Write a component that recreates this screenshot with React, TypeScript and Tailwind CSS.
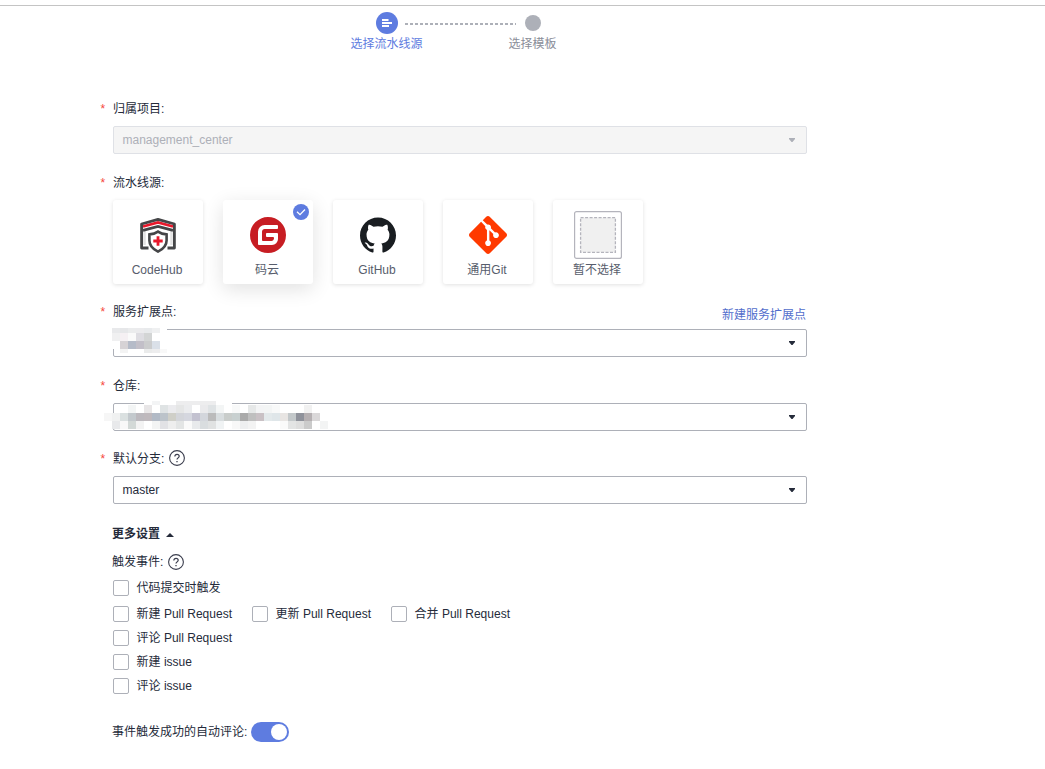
import React from "react";
import { Switch } from "@headlessui/react";
import clsx from "clsx";
import { SiGit, SiGitee, SiGithub } from "react-icons/si";

const CodeHubIcon = () => (
  <svg width="36" height="36" viewBox="0 0 36 36" fill="none">
    <path d="M4.500 14v14M31.500 14v14" stroke="#e2e2e2" strokeWidth="2.500" />
    <path d="M3 9.600 18 5.400l15 4.200" stroke="#e8192c" strokeWidth="2.600" />
    <path
      d="M8.500 31H1.600V7L18 2.300 34.400 7v24h-6.900"
      stroke="#454648"
      strokeWidth="2.800"
      strokeLinejoin="round"
    />
    <path d="M3 13.400 18 9.400l15 4" stroke="#454648" strokeWidth="2.800" />
    <path
      d="M18 14.600c2.800 2 5.600 2.600 8.600 2.800v6c0 5-3.400 8.600-8.600 11.200-5.200-2.600-8.600-6.200-8.600-11.200v-6c3-.2 5.800-.8 8.600-2.800Z"
      fill="#fff"
      stroke="#454648"
      strokeWidth="2.600"
    />
    <path d="M18 19.300v9.400M13.300 24h9.400" stroke="#e8192c" strokeWidth="2.800" />
  </svg>
);

const EmptyIcon = () => (
  <svg width="48" height="48" viewBox="0 0 48 48" fill="none">
    <rect x="0.600" y="0.600" width="46.800" height="46.800" rx="2" stroke="#b4b4bc" strokeWidth="1.200" />
    <rect
      x="6.600"
      y="6.600"
      width="34.800"
      height="34.800"
      fill="#f0f0f0"
      stroke="#b4b4bc"
      strokeWidth="1.300"
      strokeDasharray="3 1.500"
    />
  </svg>
);

const sources = [
  { name: "CodeHub", icon: <CodeHubIcon /> },
  { name: "码云", icon: <SiGitee size={36} color="#c71d23" /> },
  { name: "GitHub", icon: <SiGithub size={36} color="#191d21" /> },
  { name: "通用Git", icon: <SiGit size={38} color="#ff3a00" /> },
  { name: "暂不选择", icon: <EmptyIcon /> },
];

const Required = () => (
  <span className="-ml-[12.5px] w-[12.5px] shrink-0 text-[#f5483b]">*</span>
);

const HelpIcon = ({ className }: { className: string }) => (
  <svg className={clsx("h-4 w-4", className)} viewBox="0 0 16 16" fill="none" stroke="#3a3d4d">
    <circle cx="8" cy="8" r="7.400" strokeWidth="1.100" />
    <path d="M5.800 6.500c0-1.300.9-2.200 2.200-2.200s2.200.8 2.200 2c0 1.500-2.200 1.700-2.200 3.300" strokeWidth="1.200" />
    <path d="M8 10.900v1.300" strokeWidth="1.300" />
  </svg>
);

const Label = ({ children }: { children: React.ReactNode }) => (
  <div className="flex h-5 items-center pt-0.5">
    <Required />
    {children}
  </div>
);

type SelectProps = {
  value?: string;
  disabled?: boolean;
  children?: React.ReactNode;
};

const Select = ({ value, disabled, children }: SelectProps) => (
  <div
    className={clsx(
      "relative mt-2 flex h-7 items-center justify-between rounded-[2px] border pl-[8.500px] pr-[11px]",
      disabled ? "border-[#dfe1e6] bg-[#f5f5f5] text-[#adb0b8]" : "border-[#adb0b8]"
    )}
  >
    <span>{value}</span>
    <svg width="6" height="4" viewBox="0 0 6 4" fill={disabled ? "#adb0b8" : "#252b3a"}>
      <path d="M0 0h6v1L3.500 4h-1L0 1z" />
    </svg>
    {children}
  </div>
);

const Checkbox = ({ label }: { label: string }) => (
  <label className="flex h-4 w-[139px] items-center whitespace-nowrap">
    <span className="mr-[7.600px] h-4 w-4 shrink-0 rounded-[2px] border border-[#adb0b8]" />
    {label}
  </label>
);

// masked values, one colour per 8px block, "" lets the field show through
const endpointMask = [
  ["#e8e9eb", "#e6e7e9", "#ebeced", "#ebebed", "#e8eaec", "#eff0f1", "#fff"],
  ["#f0f0f1", "#f5f0f3", "#fafafa", "#dedde2", "#d3d5d5", "#fff", "#fff"],
  ["#fff", "#d6d2d5", "#b5bbc8", "#c2bfc8", "#cbcccd", "#dae0e8", "#fff"],
  ["", "#f3f3f3", "", "", "#eaebeb", "#ededee", "#f8f8f8"],
];

const repoMask = [
  ["", "", "", "", "", "#fff", "#f3f4f5", "#fff", "#fff", "#ededee", "#ededee", "#ededee", "#ededee", "#ededee", "#fff", "#fff", "", "", "", "", "", "", "", "", "", "", "", ""],
  ["", "", "", "#f3f5f5", "", "#e8e6e7", "", "#dfe3e4", "#ebebee", "#e5e6e6", "#ebecee", "", "#eaeaec", "#dfe3e5", "#f3f5f5", "", "#f8f9f9", "", "#e6e8e8", "#f3f4f5", "#f3f5f5", "#f8f9f9", "", "", "", "#f1f1f1", "", ""],
  ["#f6f6f6", "#f0f1f1", "#dae0e0", "#c3c9cd", "#bcb9be", "#bfb9bd", "#b2bac6", "#bcc3ca", "#cfcfc8", "#d3d5da", "#d5d7df", "#c3c2d0", "#d3d6dc", "#bbbbbb", "#d8dddf", "#c9cdcb", "#c8d0d0", "#aaaaaa", "#bfbfbf", "#c9c1c5", "#e3e9eb", "#dfe6e9", "#e8e5e3", "#c3c8ca", "#8f929b", "#b5b0b2", "#dad8d9", ""],
  ["", "#e8e9eb", "#f8f8f8", "#d3d9d7", "#f3f3f3", "", "#f3f4f4", "#e2e2e5", "#eeeeee", "#e3e5e5", "#fafafa", "#e8eaec", "#d9dddf", "#e0e2e2", "#f0f3f4", "", "#f8f8f8", "#eeeff0", "#f3f3f3", "", "", "", "#fafafa", "#e3e4e4", "#dedede", "#cbcbcb", "#fff", "#f3f4f4"],
];

type MaskProps = { rows: string[][]; firstRow: string; className: string };

const Mask = ({ rows, firstRow, className }: MaskProps) => (
  <div className={clsx("absolute overflow-hidden", className)}>
    {rows.map((row, i) => (
      <div key={i} className={clsx("flex", i === 0 ? firstRow : "h-2")}>
        {row.map((color, j) => (
          <span
            key={j}
            className="h-full w-2 shrink-0"
            style={{ backgroundColor: color || "transparent" }}
          />
        ))}
      </div>
    ))}
  </div>
);

const Stepper = () => (
  <div className="h-[92px] pt-1.5">
    <div className="flex h-[22px] items-center pl-[376px]">
      <div className="flex h-[22px] w-[22px] items-center justify-center rounded-full bg-[#5e7ce0]">
        <svg width="10" height="8" viewBox="0 0 10 8" fill="#fff">
          <path d="M0 0h6.500v2H0zM0 3h10v2H0zM0 6h7v2H0z" />
        </svg>
      </div>
      <svg className="ml-[7px] mt-0.5" width="111" height="2">
        <path d="M0 1h111" stroke="#adb0b8" strokeWidth="2" strokeDasharray="3 2" />
      </svg>
      <div className="ml-[9px] h-4 w-4 rounded-full bg-[#adb0b8]" />
    </div>
    <div className="flex h-5 items-center gap-[86px] pl-[350.500px]">
      <span className="text-[#5e7ce0]">选择流水线源</span>
      <span className="text-[#8a8e99]">选择模板</span>
    </div>
  </div>
);

const App = () => {
  const [selected, setSelected] = React.useState("码云");
  const [autoComment, setAutoComment] = React.useState(true);

  return (
    <div className="h-[769px] w-[1045px] overflow-hidden bg-white font-['Liberation_Sans','Noto_Sans_CJK_SC',sans-serif] text-xs text-[#252b3a]">
      <div className="h-1.5 border-b border-[#c4c4c4]" />
      <Stepper />

      <div className="ml-[113px] w-[694px]">
        <Label>归属项目:</Label>
        <Select value="management_center" disabled />

        <div className="mt-[18px]">
          <Label>流水线源:</Label>
        </div>
        <div className="mt-2 flex gap-5">
          {sources.map((source) => (
            <button
              key={source.name}
              type="button"
              onClick={() => setSelected(source.name)}
              className={clsx(
                "relative h-[84px] w-[90px] rounded-[3px] bg-white pb-1 text-[#575d6c]",
                selected === source.name
                  ? "shadow-[0_5px_20px_rgba(0,0,0,0.12)]"
                  : "shadow-[0_1px_4px_rgba(0,0,0,0.12)]"
              )}
            >
              <div className="flex h-[60px] items-center justify-center pt-2.5">{source.icon}</div>
              <div className="h-5 pr-0.5 leading-5">{source.name}</div>
              {selected === source.name && (
                <span className="absolute right-1 top-1 flex h-4 w-4 items-center justify-center rounded-full bg-[#5e7ce0]">
                  <svg width="10" height="8" viewBox="0 0 10 8" fill="none" stroke="#fff" strokeWidth="1.300">
                    <path d="M1 3.800 4 6.700 9 1.500" />
                  </svg>
                </span>
              )}
            </button>
          ))}
        </div>

        <div className="mt-[17px] flex justify-between">
          <Label>服务扩展点:</Label>
          <a href="#" className="-mb-2 pr-px pt-1.5 text-[#526ecc]">
            新建服务扩展点
          </a>
        </div>
        <Select>
          <Mask rows={endpointMask} firstRow="h-[5px]" className="-left-0.5 -top-0.5 h-[25px] w-[55px]" />
        </Select>

        <div className="mt-[18px]">
          <Label>仓库:</Label>
        </div>
        <Select>
          <Mask rows={repoMask} firstRow="h-1" className="-left-2.5 -top-[3px] h-7 w-[224px]" />
        </Select>

        <div className="mt-[17px]">
          <Label>
            默认分支:
            <HelpIcon className="-mt-0.5 ml-[5px]" />
          </Label>
        </div>
        <Select value="master" />

        <div className="-ml-px mt-[19px] flex h-5 items-center pt-0.5 font-bold">
          更多设置
          <svg className="ml-1.5 mt-px" width="8" height="4" viewBox="0 0 8 4" fill="#252b3a">
            <path d="M4 0 8 4H0z" />
          </svg>
        </div>
        <div className="-ml-px mt-[9px] flex h-5 items-center">
          触发事件:
          <HelpIcon className="ml-[5px]" />
        </div>

        <div className="mt-2">
          <Checkbox label="代码提交时触发" />
        </div>
        <div className="mt-2.5 flex">
          <Checkbox label="新建 Pull Request" />
          <Checkbox label="更新 Pull Request" />
          <Checkbox label="合并 Pull Request" />
        </div>
        <div className="mt-2 flex flex-col gap-2">
          <Checkbox label="评论 Pull Request" />
          <Checkbox label="新建 issue" />
          <Checkbox label="评论 issue" />
        </div>

        <div className="-ml-px mt-7 flex h-5 items-center">
          <span className="-mt-px">事件触发成功的自动评论:</span>
          <Switch
            checked={autoComment}
            onChange={setAutoComment}
            className={clsx(
              "ml-1 flex h-5 w-[38px] items-center rounded-full px-0.5",
              autoComment ? "justify-end bg-[#5e7ce0]" : "bg-[#adb0b8]"
            )}
          >
            <span className="h-4 w-4 rounded-full bg-white" />
          </Switch>
        </div>
      </div>
    </div>
  );
};

export default App;
